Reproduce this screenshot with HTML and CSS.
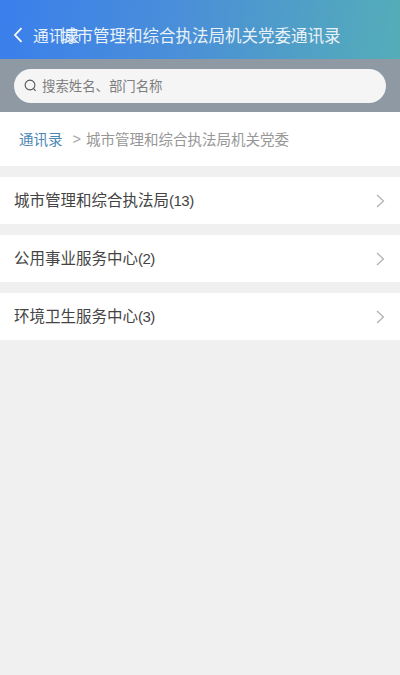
FILE: index.html
```html
<!DOCTYPE html>
<html lang="zh-CN">
<head>
<meta charset="utf-8">
<title>城市管理和综合执法局机关党委通讯录</title>
<link rel="stylesheet" href="styles.css">
</head>
<body>
<div class="page">
  <header class="nav">
    <svg class="back" width="10" height="16" viewBox="0 0 10 16"><path d="M8.5 1.2 2 8l6.5 6.8" fill="none" stroke="#fff" stroke-width="1.8"/></svg>
    <span class="back-label">通讯录</span>
    <span class="title">城市管理和综合执法局机关党委通讯录</span>
  </header>
  <div class="search-band">
    <div class="search">
      <svg width="13" height="13" viewBox="0 0 13 13"><circle cx="6" cy="6" r="4.9" fill="none" stroke="#555" stroke-width="1.1"/><path d="M9.6 9.6 11.6 11.8" stroke="#555" stroke-width="1.1" fill="none"/></svg>
      <span class="placeholder">搜索姓名、部门名称</span>
    </div>
  </div>
  <nav class="crumbs">
    <span class="crumb-root">通讯录</span>
    <span class="crumb-sep">&gt;</span>
    <span class="crumb-current">城市管理和综合执法局机关党委</span>
  </nav>
  <ul class="list">
    <li class="row"><span class="row-label">城市管理和综合执法局<span class="count">(13)</span></span><svg class="chev" width="9" height="14" viewBox="0 0 9 14"><path d="M1 1l6.5 6L1 13" fill="none" stroke="#b3b3b3" stroke-width="1.3"/></svg></li>
    <li class="row"><span class="row-label">公用事业服务中心<span class="count">(2)</span></span><svg class="chev" width="9" height="14" viewBox="0 0 9 14"><path d="M1 1l6.5 6L1 13" fill="none" stroke="#b3b3b3" stroke-width="1.3"/></svg></li>
    <li class="row"><span class="row-label">环境卫生服务中心<span class="count">(3)</span></span><svg class="chev" width="9" height="14" viewBox="0 0 9 14"><path d="M1 1l6.5 6L1 13" fill="none" stroke="#b3b3b3" stroke-width="1.3"/></svg></li>
  </ul>
</div>
</body>
</html>
```
FILE: styles.css
```css
* { box-sizing: border-box; }
html, body { margin: 0; padding: 0; }
body {
  background: #f0f0f0;
  font-family: "Liberation Sans", "Noto Sans CJK SC", sans-serif;
}
.page { width: 400px; height: 675px; overflow: hidden; }
.nav {
  position: relative;
  height: 59px;
  padding: 11px 0 0 13px;
  display: flex;
  align-items: center;
  gap: 10px;
  color: #e9f1f8;
  background: linear-gradient(97deg, #3a7fec 0%, #4a8fd8 45%, #55adb8 100%);
}
.back-label { font-size: 15.7px; }
.title {
  position: absolute;
  left: 60px;
  top: 26px;
  font-size: 16.5px;
  line-height: 20px;
  white-space: nowrap;
}
.search-band {
  height: 53px;
  padding: 10px 14px 0;
  background: #8f99a3;
}
.search {
  height: 34px;
  border-radius: 17px;
  background: #f5f5f6;
  display: flex;
  align-items: center;
  gap: 5px;
  padding: 0 0 2px 10px;
}
.placeholder { font-size: 13.4px; color: #7d7d7d; }
.crumbs {
  height: 54px;
  background: #fff;
  display: flex;
  align-items: center;
  padding: 0 0 2px 19px;
  font-size: 14.5px;
}
.crumb-root { color: #4a86b4; }
.crumb-sep { color: #a6a6a6; margin: 2px 5px 0 10px; }
.crumb-current { color: #979797; }
.list { list-style: none; margin: 0; padding: 11px 0 0; display: flex; flex-direction: column; gap: 11px; }
.row {
  height: 47px;
  background: #fff;
  display: flex;
  align-items: center;
  justify-content: space-between;
  padding: 0 15px 0 14px;
  font-size: 15.5px;
  color: #444;
}
.row-label { position: relative; top: -2px; }
.count { font-size: 15px; letter-spacing: -0.5px; }
```
